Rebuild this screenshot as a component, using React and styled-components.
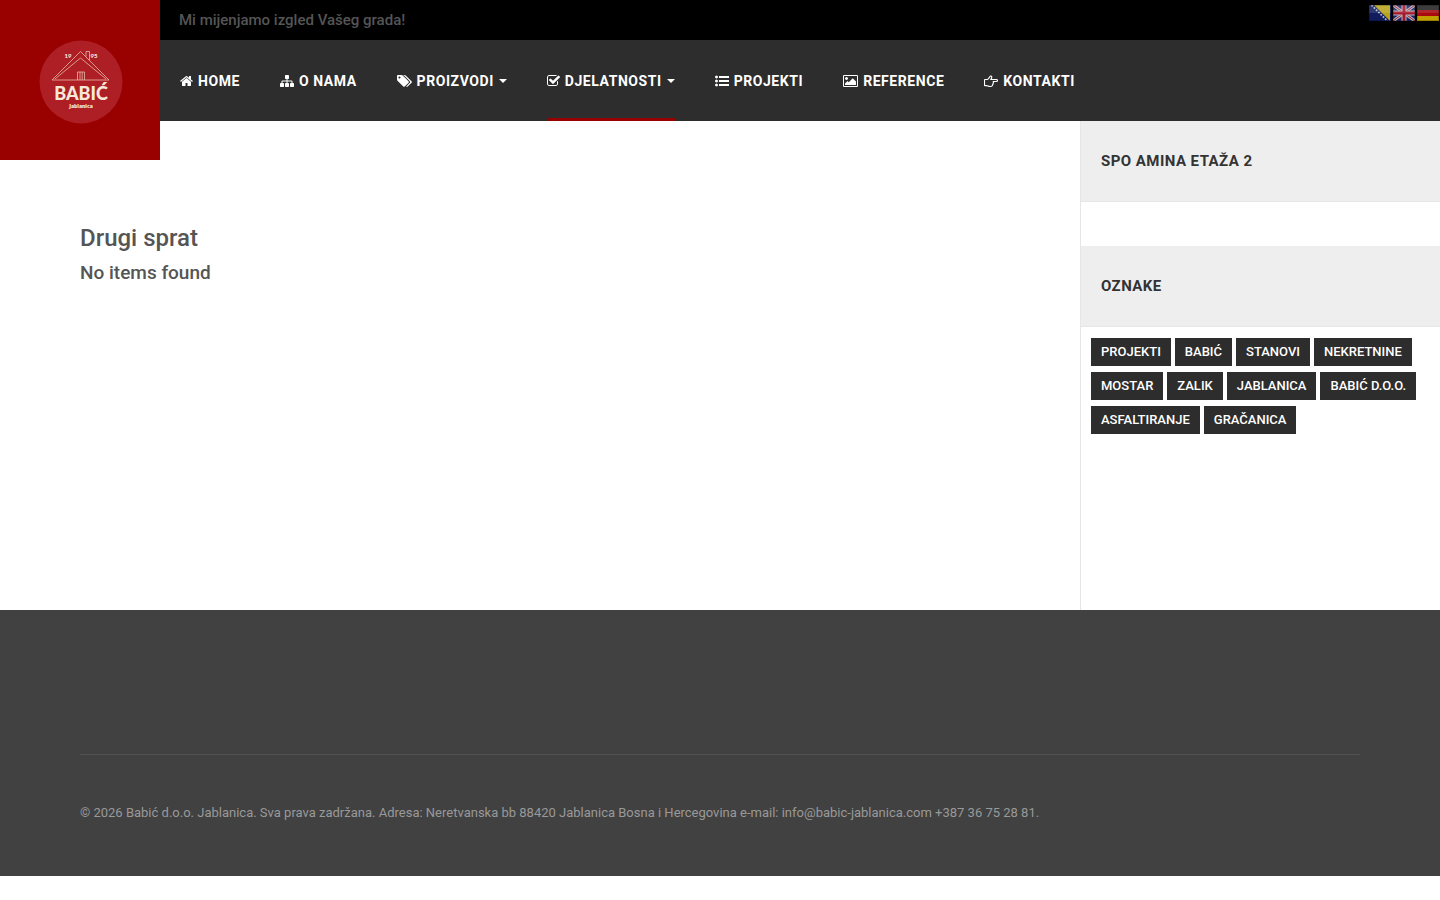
import React from "react";
import styled, { createGlobalStyle } from "styled-components";

const GlobalStyle = createGlobalStyle`
  *, *::before, *::after { box-sizing: border-box; }
  body {
    margin: 0;
    background: #fff;
    color: #555;
    font-family: Roboto, "Liberation Sans", sans-serif;
    font-size: 14px;
    line-height: 20px;
  }
  h1, h2, h3, p, ul { margin: 0; padding: 0; }
  ul { list-style: none; }
  a { color: inherit; text-decoration: none; }
`;

const Header = styled.header`
  position: relative;
  padding-left: 160px;
  background: #2d2d2d;
`;

const LogoLink = styled.a`
  position: absolute;
  top: 0;
  left: 0;
  z-index: 2;
  width: 160px;
  height: 160px;
  background: #900;
  svg { display: block; }
`;

const TopBar = styled.div`
  display: flex;
  justify-content: space-between;
  height: 40px;
  margin-left: -160px;
  padding: 0 1px 0 179px;
  background: #000;
`;

const Tagline = styled.p`
  font-size: 15px;
  font-weight: 500;
  line-height: 40px;
`;

const Flags = styled.div`
  display: flex;
  gap: 2px;
  padding-top: 5px;
  a { display: block; height: 16px; }
  svg { display: block; }
`;

const NavList = styled.ul`
  display: flex;
  height: 81px;
`;

const NavItem = styled.li`
  padding: 0 20px;
`;

const NavLink = styled.a`
  display: flex;
  align-items: center;
  height: 81px;
  color: #fff;
  font-weight: 700;
  letter-spacing: 0.04em;
  text-transform: uppercase;
  border-top: 3px solid transparent;
  border-bottom: 3px solid ${(p) => (p.$active ? "#900" : "transparent")};
`;

const NavIcon = styled.svg`
  height: 14px;
  margin-right: 5px;
  fill: currentColor;
`;

const Caret = styled.span`
  margin-left: 5px;
  border: 4px solid transparent;
  border-top-color: currentColor;
  border-bottom: 0;
`;

const Body = styled.div`
  display: grid;
  grid-template-columns: 3fr 1fr;
  min-height: 489px;
`;

const Main = styled.main`
  padding: 100px 80px;
`;

const Title = styled.h1`
  font-size: 24px;
  font-weight: 500;
  line-height: 34px;
`;

const Notice = styled.h2`
  font-size: 19px;
  font-weight: 500;
  line-height: 36px;
`;

const Sidebar = styled.aside`
  border-left: 1px solid #e6e6e6;
`;

const Widget = styled.section`
  margin-bottom: 44px;
`;

const WidgetTitle = styled.h3`
  padding: 30px 20px;
  background: #eee;
  border-bottom: 1px solid #e6e6e6;
  color: #333;
  font-size: 15px;
  font-weight: 700;
  letter-spacing: 0.03em;
  line-height: 20px;
  text-transform: uppercase;
`;

const TagList = styled.ul`
  display: flex;
  flex-wrap: wrap;
  gap: 6px 4px;
  padding: 11px 10px;
`;

const Tag = styled.a`
  display: block;
  padding: 0 10px;
  background: #2d2d2d;
  color: #fff;
  font-size: 13px;
  font-weight: 500;
  line-height: 28px;
  text-transform: uppercase;
`;

const Footer = styled.footer`
  padding: 144px 80px 53px;
  background: #414141;
`;

const Copyright = styled.p`
  padding-top: 48px;
  border-top: 1px solid #515151;
  color: #999;
  font-size: 13px;
`;

const BAR = "q0 13-9.5 22.5t-22.5 9.5h-1216q-13 0-22.5-9.5t-9.5-22.5v-192q0-13 9.5-22.5t22.5-9.5h1216q13 0 22.5 9.5t9.5 22.5z";
const DOT = "q0 80-56 136t-136 56-136-56-56-136 56-136 136-56 136 56 56 136z";

const ICONS = {
  home: {
    x: 64, w: 1664,
    d: "M1472 992v480q0 26-19 45t-45 19h-384v-384h-256v384h-384q-26 0-45-19t-19-45v-480q0-1 .5-3t.5-3l575-474 575 474q1 2 1 6zm223-69l-62 74q-8 9-21 11h-3q-13 0-21-7l-692-577-692 577q-12 8-24 7-13-2-21-11l-62-74q-8-10-7-23.5t11-21.5l719-599q32-26 76-26t76 26l244 204v-195q0-14 9-23t23-9h192q14 0 23 9t9 23v408l219 182q10 8 11 21.5t-7 23.5z",
  },
  sitemap: {
    x: 0, w: 1792,
    d: "M1792 1248v320q0 40-28 68t-68 28h-320q-40 0-68-28t-28-68v-320q0-40 28-68t68-28h96v-192h-512v192h96q40 0 68 28t28 68v320q0 40-28 68t-68 28h-320q-40 0-68-28t-28-68v-320q0-40 28-68t68-28h96v-192h-512v192h96q40 0 68 28t28 68v320q0 40-28 68t-68 28h-320q-40 0-68-28t-28-68v-320q0-40 28-68t68-28h96v-192q0-52 38-90t90-38h512v-192h-96q-40 0-68-28t-28-68v-320q0-40 28-68t68-28h320q40 0 68 28t28 68v320q0 40-28 68t-68 28h-96v192h512q52 0 90 38t38 90v192h96q40 0 68 28t28 68z",
  },
  tags: {
    x: 0, w: 1920,
    d: "M448 448q0-53-37.5-90.5t-90.5-37.5-90.5 37.5-37.5 90.5 37.5 90.5 90.5 37.5 90.5-37.5 37.5-90.5zm1067 576q0 53-37 90l-491 492q-39 37-91 37-53 0-90-37l-715-716q-38-37-64.5-101t-26.5-117v-416q0-52 38-90t90-38h416q53 0 117 26.5t102 64.5l715 714q37 39 37 91zm384 0q0 53-37 90l-491 492q-39 37-91 37-36 0-59-14t-53-45l470-470q37-37 37-90 0-52-37-91l-715-714q-38-38-102-64.5t-117-26.5h224q53 0 117 26.5t102 64.5l715 714q37 39 37 91z",
  },
  check: {
    x: 64, w: 1664,
    d: "M1472 930v318q0 119-84.5 203.5t-203.5 84.5h-832q-119 0-203.5-84.5t-84.5-203.5v-832q0-119 84.5-203.5t203.5-84.5h832q63 0 117 25 15 7 18 23 3 17-9 29l-49 49q-10 10-23 10-3 0-9-2-23-6-45-6h-832q-66 0-113 47t-47 113v832q0 66 47 113t113 47h832q66 0 113-47t47-113v-254q0-13 9-22l64-64q10-10 23-10 6 0 12 3 20 8 20 29zm231-489l-814 814q-24 24-57 24t-57-24l-430-430q-24-24-24-57t24-57l110-110q24-24 57-24t57 24l263 263 647-647q24-24 57-24t57 24l110 110q24 24 24 57t-24 57z",
  },
  list: {
    x: 0, w: 1792,
    d: `M384 1408${DOT}M384 896${DOT}M384 384${DOT}M1792 1312v192${BAR}M1792 800v192${BAR}M1792 288v192${BAR}`,
  },
  image: {
    x: 0, w: 1920,
    d: "M640 576q0 80-56 136t-136 56-136-56-56-136 56-136 136-56 136 56 56 136zm1024 384v448h-1408v-192l320-320 160 160 512-512zm96-704h-1600q-13 0-22.5 9.5t-9.5 22.5v1216q0 13 9.5 22.5t22.5 9.5h1600q13 0 22.5-9.5t9.5-22.5v-1216q0-13-9.5-22.5t-22.5-9.5zm160 32v1216q0 66-47 113t-113 47h-1600q-66 0-113-47t-47-113v-1216q0-66 47-113t113-47h1600q66 0 113 47t47 113z",
  },
  hand: {
    x: 0, w: 1792, outline: true,
    d: "M128 704h288q70 0 170-130t150-210q60-120 150-100 140 40 100 210-20 90-100 230h714a126 126 0 010 256h-400q60 120-40 220 40 110-70 200 10 140-120 180-40 40-130 40h-90q-120 0-240-60t-170-60h-212q-64 0-64-64v-648q0-64 64-64z",
  },
};

const NAV = [
  { label: "Home", icon: "home" },
  { label: "O nama", icon: "sitemap" },
  { label: "Proizvodi", icon: "tags", menu: true },
  { label: "Djelatnosti", icon: "check", menu: true, active: true },
  { label: "Projekti", icon: "list" },
  { label: "Reference", icon: "image" },
  { label: "Kontakti", icon: "hand" },
];

const TAGS = [
  "Projekti", "Babić", "Stanovi", "Nekretnine", "Mostar", "Zalik",
  "Jablanica", "Babić d.o.o.", "Asfaltiranje", "Gračanica",
];

function Icon({ name }) {
  const { x, w, d, outline } = ICONS[name];
  return (
    <NavIcon viewBox={`${x} 0 ${w} 1792`} width={w / 128} aria-hidden="true">
      <path d={d} {...(outline ? { fill: "none", stroke: "currentColor", strokeWidth: 144 } : {})} />
    </NavIcon>
  );
}

function Logo() {
  return (
    <svg width="160" height="160" viewBox="0 0 160 160" role="img" aria-label="Babić Jablanica 1995">
      <circle cx="81" cy="82" r="41.5" fill="#ad1e25" />
      <g fill="none" stroke="#eab9a8" strokeWidth="0.8">
        <path d="M52 80L80.500 51.500L109 80Z" />
        <path d="M55 79L80.500 58L106 79" />
        <path d="M86 56.500V51.500H89.500V60" />
        <path d="M77.500 80V72H84.500V80M80 72V80M82.200 72V80" />
      </g>
      <g fill="#f6e9da" textAnchor="middle" fontFamily="Lato, sans-serif" fontWeight="900">
        <text x="68" y="58" fontSize="6">19</text>
        <text x="94" y="58" fontSize="6">95</text>
        <text x="81" y="100" fontSize="18">BABIĆ</text>
        <text x="81" y="108" fontSize="5" fontFamily="'Open Sans', sans-serif" fontWeight="800">Jablanica</text>
      </g>
    </svg>
  );
}

function Shine() {
  return (
    <>
      <path d="M0 0H22V8H0Z" fill="#fff" opacity="0.12" />
      <path d="M0.500 0.500H21.500V15.500H0.500Z" fill="none" stroke="#000" opacity="0.2" />
    </>
  );
}

function BosnianFlag() {
  return (
    <svg width="22" height="16" viewBox="0 0 22 16">
      <path d="M0 0H22V16H0Z" fill="#101c5e" />
      <path d="M5 0H21V16Z" fill="#b8a31c" />
      <path d="M2.500 0L18.500 16" stroke="#b0b6cc" strokeWidth="1.800" strokeDasharray="1.800 1.400" />
      <Shine />
    </svg>
  );
}

function BritishFlag() {
  return (
    <svg width="22" height="16" viewBox="0 0 22 16">
      <path d="M0 0H22V16H0Z" fill="#1c2768" />
      <path d="M0 0L22 16M22 0L0 16" stroke="#b5b5bd" strokeWidth="3" />
      <path d="M0 0L22 16M22 0L0 16" stroke="#a81c2c" strokeWidth="1" />
      <path d="M11 0V16M0 8H22" stroke="#b9b9c0" strokeWidth="5" />
      <path d="M11 0V16M0 8H22" stroke="#a8162a" strokeWidth="3" />
      <Shine />
    </svg>
  );
}

function GermanFlag() {
  return (
    <svg width="22" height="16" viewBox="0 0 22 16">
      <path d="M0 0H22V5H0Z" fill="#222" />
      <path d="M0 5H22V11H0Z" fill="#a80a10" />
      <path d="M0 11H22V16H0Z" fill="#c2a000" />
      <Shine />
    </svg>
  );
}

export default function App() {
  return (
    <>
      <GlobalStyle />
      <Header>
        <LogoLink href="#"><Logo /></LogoLink>
        <TopBar>
          <Tagline>Mi mijenjamo izgled Vašeg grada!</Tagline>
          <Flags>
            <a href="#bs" aria-label="Bosanski"><BosnianFlag /></a>
            <a href="#en" aria-label="English"><BritishFlag /></a>
            <a href="#de" aria-label="Deutsch"><GermanFlag /></a>
          </Flags>
        </TopBar>
        <nav>
          <NavList>
            {NAV.map((item) => (
              <NavItem key={item.label}>
                <NavLink href="#" $active={item.active}>
                  <Icon name={item.icon} />
                  {item.label}
                  {item.menu && <Caret />}
                </NavLink>
              </NavItem>
            ))}
          </NavList>
        </nav>
      </Header>
      <Body>
        <Main>
          <Title>Drugi sprat</Title>
          <Notice>No items found</Notice>
        </Main>
        <Sidebar>
          <Widget>
            <WidgetTitle>SPO Amina etaža 2</WidgetTitle>
          </Widget>
          <Widget>
            <WidgetTitle>Oznake</WidgetTitle>
            <TagList>
              {TAGS.map((tag) => (
                <li key={tag}><Tag href="#">{tag}</Tag></li>
              ))}
            </TagList>
          </Widget>
        </Sidebar>
      </Body>
      <Footer>
        <Copyright>
          © 2026 Babić d.o.o. Jablanica. Sva prava zadržana. Adresa: Neretvanska bb 88420 Jablanica Bosna i Hercegovina e-mail: info@babic-jablanica.com +387 36 75 28 81.
        </Copyright>
      </Footer>
    </>
  );
}
